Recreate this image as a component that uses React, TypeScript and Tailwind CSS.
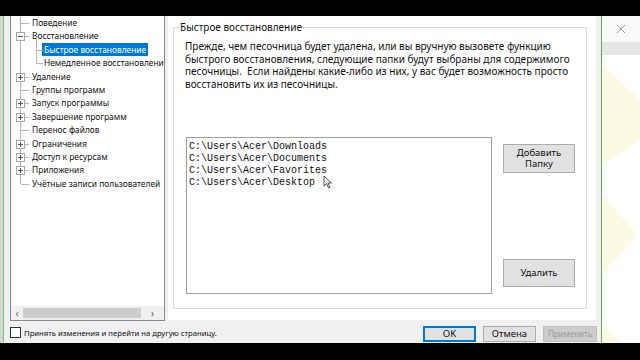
import React from "react";

const SANS = { fontFamily: '"Noto Sans", "Open Sans", sans-serif' };
const MONO = { fontFamily: '"Liberation Mono", monospace' };

type Item = { label: string; box?: "plus" | "minus"; level?: number; selected?: boolean; last?: boolean; childLast?: boolean };

const items: Item[] = [
  { label: "Поведение" },
  { label: "Восстановление", box: "minus" },
  { label: "Быстрое восстановление", level: 1, selected: true },
  { label: "Немедленное восстановление", level: 1, childLast: true },
  { label: "Удаление", box: "plus" },
  { label: "Группы программ" },
  { label: "Запуск программы", box: "plus" },
  { label: "Завершение программ", box: "plus" },
  { label: "Перенос файлов" },
  { label: "Ограничения", box: "plus" },
  { label: "Доступ к ресурсам", box: "plus" },
  { label: "Приложения", box: "plus" },
  { label: "Учётные записи пользователей", last: true },
];

function Expander({ kind }: { kind: "plus" | "minus" }) {
  return (
    <div className="absolute left-[5px] top-[2.5px] w-[9px] h-[9px] border border-[#a6a6a6] bg-white flex items-center justify-center z-10">
      <div className="relative w-[5px] h-[5px]">
        <div className="absolute left-0 top-[2px] w-[5px] h-[1px] bg-[#555]" />
        {kind === "plus" && <div className="absolute left-[2px] top-0 w-[1px] h-[5px] bg-[#555]" />}
      </div>
    </div>
  );
}

function TreeRow({ it }: { it: Item }) {
  const lvl = it.level ?? 0;
  const mainLineFull = !it.last;
  return (
    <div className="relative h-[13.4px] flex items-center whitespace-nowrap">
      <div className={`absolute left-[9px] w-[1px] bg-[#b4b4b4] top-0 ${mainLineFull ? "h-full" : "h-[7px]"}`} />
      {lvl === 0 && <div className="absolute left-[10px] top-[6.5px] w-[8px] h-[1px] bg-[#b4b4b4]" />}
      {lvl === 1 && (
        <>
          <div className={`absolute left-[25px] top-0 w-[1px] bg-[#b4b4b4] ${it.childLast ? "h-[7px]" : "h-full"}`} />
          <div className="absolute left-[26px] top-[6.5px] w-[6px] h-[1px] bg-[#b4b4b4]" />
        </>
      )}
      {it.box && <Expander kind={it.box} />}
      {it.box === "minus" && <div className="absolute left-[25px] top-[7px] w-[1px] h-[7px] bg-[#b4b4b4]" />}
      <div
        className={`${lvl === 0 ? "ml-[19px]" : "ml-[31px]"} h-[13px] flex items-center px-[2px] text-[8.4px] leading-none ${
          it.selected ? "bg-[#0078d7] text-white" : "text-[#111]"
        }`}
      >
        {it.label}
      </div>
    </div>
  );
}

function Tree() {
  return (
    <div className="w-[155px] h-full bg-white border-l border-r border-b border-[#828790] flex flex-col">
      <div className="flex-1 overflow-hidden pt-[0.5px]">
        {items.map((it, i) => (
          <TreeRow key={i} it={it} />
        ))}
      </div>
      <div className="h-[14px] bg-[#f0f0f0] flex items-center shrink-0">
        <div className="w-[12px] flex items-center justify-center text-[10px] leading-none text-[#606060]">‹</div>
        <div className="w-[118px] h-[10px] bg-[#cdcdcd]" />
        <div className="flex-1 flex items-center justify-center text-[10px] leading-none text-[#606060]">›</div>
      </div>
    </div>
  );
}

function Btn({ children, className = "" }: { children: React.ReactNode; className?: string }) {
  return (
    <div className={`bg-[#e1e1e1] border border-[#adadad] flex items-center justify-center text-center text-[9.5px] leading-[11.5px] text-[#111] ${className}`}>
      {children}
    </div>
  );
}

function Page() {
  return (
    <div className="w-[428px] h-[304px] bg-white pl-[5px] pt-[11px]">
      <div className="relative w-[414px] h-[282px] border border-[#dcdcdc] pl-[11px] pt-[12px]">
        <div className="absolute left-[5px] -top-[7px] bg-white px-[1px] text-[10px] leading-[13px] text-[#111]">
          Быстрое восстановление
        </div>
        <div className="text-[10px] leading-[12.7px] text-[#111] whitespace-nowrap">
          <div>Прежде, чем песочница будет удалена, или вы вручную вызовете функцию</div>
          <div>быстрого восстановления, следующие папки будут выбраны для содержимого</div>
          <div>песочницы.&nbsp; Если найдены какие-либо из них, у вас будет возможность просто</div>
          <div>восстановить их из песочницы.</div>
        </div>
        <div className="mt-[46px] flex">
          <div className="relative ml-[1px] w-[306px] h-[157px] border border-[#a0a0a0] bg-white pl-[2px] pt-[3px] text-[10px] leading-[12px] text-[#111]" style={MONO}>
            <div>C:\Users\Acer\Downloads</div>
            <div>C:\Users\Acer\Documents</div>
            <div>C:\Users\Acer\Favorites</div>
            <div>C:\Users\Acer\Desktop</div>
            <svg width="10" height="14" viewBox="0 0 10 14" className="absolute left-[136px] top-[37px]">
              <path d="M1 1 L1 11 L3.5 8.5 L5.5 13 L7 12.3 L5 8 L8.5 8 Z" fill="white" stroke="#222" strokeWidth="0.8" />
            </svg>
          </div>
          <div className="ml-[11px] w-[72px] flex flex-col justify-between py-[7px]">
            <Btn className="h-[29px]">
              Добавить
              <br />
              Папку
            </Btn>
            <Btn className="h-[28px]">Удалить</Btn>
          </div>
        </div>
      </div>
    </div>
  );
}

function RightWindow() {
  return (
    <div className="w-[38px] h-full flex flex-col bg-white">
      <div className="h-[26px] bg-[#fafafa] flex items-center justify-center">
        <svg width="10" height="10" viewBox="0 0 10 10">
          <path d="M1 1 L9 9 M9 1 L1 9" stroke="#9a9a9a" strokeWidth="1" />
        </svg>
      </div>
      <div className="h-[13px] bg-[#e6e6e6]" />
      <div className="flex-1">
        <svg width="38" height="288" viewBox="0 0 38 288" className="block">
          <polygon points="0,10 38,45 38,85 0,110" fill="#fbfbe4" />
          <polygon points="0,140 36,180 0,220" fill="#fbfbe4" />
          <polygon points="0,270 20,288 0,288" fill="#fbfbe4" />
        </svg>
      </div>
    </div>
  );
}

export default function App() {
  return (
    <div className="w-[640px] h-[360px] bg-black flex flex-col overflow-hidden" style={SANS}>
      <div className="h-[16px] shrink-0" />
      <div className="h-[327px] flex shrink-0">
        <div className="w-[3px] bg-[#d6d6d6]" />
        <div className="w-[1px] bg-[#7cc47c]" />
        <div className="w-[597px] h-full bg-[#f0f0f0] flex flex-col">
          <div className="h-[305px] flex pl-[6px]">
            <Tree />
            <div className="ml-[3px]">
              <Page />
            </div>
          </div>
          <div className="flex-1 flex items-start pt-[5px]">
            <div className="ml-[6px] mt-[1px] w-[11px] h-[11px] border border-[#333] bg-white" />
            <div className="ml-[3px] mt-[0.5px] text-[7.7px] leading-[13px] text-[#111]">
              Принять изменения и перейти на другую страницу.
            </div>
            <div className="flex-1" />
            <div className="w-[53px] h-[16px] border-2 border-[#0078d7] bg-[#e1e1e1] flex items-center justify-center text-[9.5px] text-[#111]">
              OK
            </div>
            <div className="ml-[7px] w-[53px] h-[16px] border border-[#adadad] bg-[#e1e1e1] flex items-center justify-center text-[9.5px] text-[#111]">
              Отмена
            </div>
            <div className="ml-[7px] mr-[4px] w-[54px] h-[16px] border border-[#bfbfbf] bg-[#cccccc] flex items-center justify-center text-[8px] text-[#9a9a9a]">
              Применить
            </div>
          </div>
        </div>
        <div className="w-[1px] bg-[#59b059]" />
        <RightWindow />
      </div>
      <div className="flex-1" />
    </div>
  );
}
